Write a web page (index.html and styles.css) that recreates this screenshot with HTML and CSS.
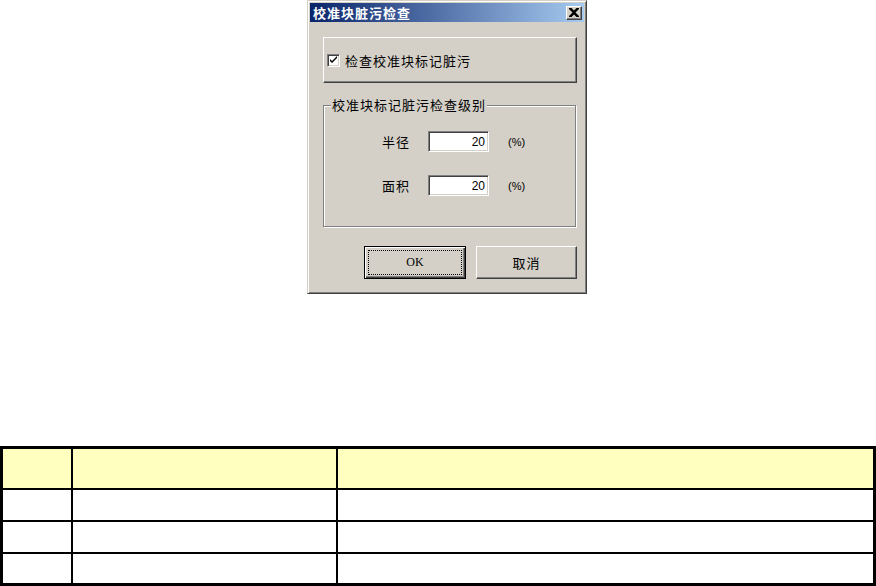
FILE: index.html
```html
<!DOCTYPE html>
<html lang="zh-CN">
<head>
  <meta charset="utf-8">
  <title>校准块脏污检查</title>
  <link rel="stylesheet" href="styles.css">
</head>
<body>
  <div class="dialog">
    <div class="titlebar">
      <span class="title">校准块脏污检查</span>
      <span class="close">
        <svg width="10" height="9" viewBox="0 0 10 9"><path d="M0 0h2.5l2.5 2.5 2.5-2.5H10v1L6.5 4.5 10 8v1H7.5L5 6.5 2.5 9H0V8l3.5-3.5L0 1z" fill="#000"/></svg>
      </span>
    </div>
    <div class="dialog-body">
      <div class="check-button">
        <span class="checkbox">
          <svg width="9" height="9" viewBox="0 0 9 9"><path d="M1 3l2 2 5-5v2L3 7 1 5z" fill="#000"/></svg>
        </span>
        <span class="check-label">检查校准块标记脏污</span>
      </div>
      <div class="group">
        <span class="legend">校准块标记脏污检查级别</span>
        <div class="field">
          <label for="radius">半径</label>
          <input type="text" id="radius" class="num" value="20" readonly>
          <span class="unit">(%)</span>
        </div>
        <div class="field">
          <label for="area">面积</label>
          <input type="text" id="area" class="num" value="20" readonly>
          <span class="unit">(%)</span>
        </div>
      </div>
      <div class="buttons">
        <button class="btn btn-default">OK</button>
        <button class="btn">取消</button>
      </div>
    </div>
  </div>
  <table class="grid">
    <tr class="head"><td class="c1"></td><td class="c2"></td><td class="c3"></td></tr>
    <tr><td class="c1"></td><td class="c2"></td><td class="c3"></td></tr>
    <tr><td class="c1"></td><td class="c2"></td><td class="c3"></td></tr>
    <tr class="last"><td class="c1"></td><td class="c2"></td><td class="c3"></td></tr>
  </table>
</body>
</html>
```

FILE: styles.css
```css
body {
  margin: 0;
  background: #fff;
  font-family: "Noto Sans CJK SC", sans-serif;
  font-size: 13px;
}
.dialog {
  margin-left: 307px;
  width: 280px;
  height: 294px;
  box-sizing: border-box;
  padding: 2px;
  background: #d4d0c8;
  border: 1px solid;
  border-color: #d4d0c8 #404040 #404040 #d4d0c8;
  box-shadow: inset 1px 1px #fff, inset -1px -1px #808080;
}
.titlebar {
  height: 19px;
  display: flex;
  align-items: center;
  justify-content: space-between;
  padding: 0 2px 0 3px;
  background: linear-gradient(to right, #0a246a, #a6caf0);
}
.title {
  color: #fff;
  font-weight: bold;
  letter-spacing: 1px;
  line-height: 16px;
}
.close {
  width: 16px;
  height: 14px;
  box-sizing: border-box;
  display: flex;
  align-items: center;
  justify-content: center;
  background: #d4d0c8;
  border: 1px solid;
  border-color: #fff #404040 #404040 #fff;
  box-shadow: inset -1px -1px #808080;
}
.dialog-body {
  display: flex;
  flex-direction: column;
  padding: 15px 7px 0 13px;
}
.check-button {
  height: 46px;
  box-sizing: border-box;
  display: flex;
  align-items: center;
  padding-left: 3px;
  margin-bottom: 22px;
  border: 1px solid;
  border-color: #fff #404040 #404040 #fff;
  box-shadow: inset -1px -1px #808080;
}
.checkbox {
  width: 13px;
  height: 13px;
  box-sizing: border-box;
  display: flex;
  align-items: center;
  justify-content: center;
  background: #fff;
  border: 1px solid;
  border-color: #808080 #fff #fff #808080;
  box-shadow: inset 1px 1px #404040, inset -1px -1px #d4d0c8;
}
.check-label {
  margin-left: 5px;
  letter-spacing: 1px;
  color: #000;
}
.group {
  position: relative;
  width: 253px;
  height: 122px;
  box-sizing: border-box;
  padding: 25px 0 0 58px;
  margin-bottom: 19px;
  border: 1px solid #808080;
  box-shadow: 1px 1px #fff, inset 1px 1px #fff;
  display: flex;
  flex-direction: column;
  gap: 23px;
}
.legend {
  position: absolute;
  top: -9px;
  left: 7px;
  padding: 0 1px;
  line-height: 16px;
  background: #d4d0c8;
  letter-spacing: 1px;
}
.field {
  display: flex;
  align-items: center;
  height: 21px;
}
.field label {
  width: 28px;
  margin-right: 18px;
  letter-spacing: 1px;
}
.num {
  width: 61px;
  height: 21px;
  box-sizing: border-box;
  padding: 0 3px;
  margin: 0;
  text-align: right;
  font-family: "Liberation Sans", sans-serif;
  font-size: 12px;
  color: #000;
  background: #fff;
  border: 1px solid;
  border-color: #808080 #fff #fff #808080;
  box-shadow: inset 1px 1px #404040, inset -1px -1px #d4d0c8;
  outline: none;
}
.unit {
  margin-left: 19px;
  font-family: "Liberation Sans", sans-serif;
  font-size: 11px;
}
.buttons {
  display: flex;
  justify-content: flex-end;
  gap: 10px;
}
.btn {
  width: 101px;
  height: 33px;
  padding: 0;
  background: #d4d0c8;
  color: #000;
  font-family: "Noto Sans CJK SC", sans-serif;
  font-size: 13px;
  letter-spacing: 1px;
  border: 1px solid;
  border-color: #fff #404040 #404040 #fff;
  box-shadow: inset -1px -1px #808080;
}
.btn-default {
  width: 102px;
  font-family: "Liberation Serif", serif;
  font-size: 12px;
  letter-spacing: 0;
  border-color: #000;
  box-shadow: inset 1px 1px #fff, inset -1px -1px #404040, inset -2px -2px #808080;
  outline: 1px dotted #000;
  outline-offset: -5px;
}
.grid {
  margin-top: 152px;
  width: 876px;
  border-collapse: separate;
  border-spacing: 0;
  border: 3px solid #000;
}
.grid td {
  padding: 0;
  height: 30px;
  border-right: 2px solid #000;
  border-bottom: 2px solid #000;
}
.grid .c1 { width: 68px; }
.grid .c2 { width: 263px; }
.grid .c3 { border-right: none; }
.grid .head td {
  height: 39px;
  background: #ffffc0;
}
.grid .last td {
  height: 29px;
  border-bottom: none;
}
```
